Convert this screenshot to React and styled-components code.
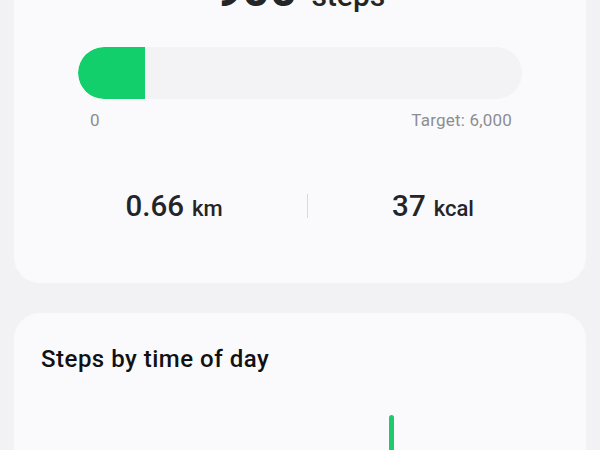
import React from "react";
import styled, { createGlobalStyle } from "styled-components";

const GlobalStyle = createGlobalStyle`
  html, body {
    margin: 0;
    padding: 0;
    background: #f2f2f4;
    font-family: Roboto, "Noto Sans", sans-serif;
    color: #252527;
    overflow: hidden;
  }
`;

const Page = styled.div`
  display: flex;
  flex-direction: column;
  gap: 30px;
  padding: 0 14px;
  margin-top: -62px;
`;

const Card = styled.div`
  background: #fafafc;
  border-radius: 26px;
  padding: ${(p) => p.$pad};
`;

const Headline = styled.div`
  display: flex;
  justify-content: center;
  align-items: baseline;
  line-height: 56px;

  .count {
    font-size: 48px;
    font-weight: 700;
  }
  .unit {
    font-size: 30px;
    font-weight: 500;
    margin-left: 14px;
  }
`;

const Track = styled.div`
  margin: 23px 37px 0;
  height: 52px;
  border-radius: 26px;
  background: #f3f3f5;
  overflow: hidden;
`;

const Fill = styled.div`
  height: 100%;
  background: #12cf6c;
  border-radius: 26px 0 0 26px;
`;

const Scale = styled.div`
  display: flex;
  justify-content: space-between;
  margin: 10px 47px 0 49px;
  line-height: 22px;
  font-size: 17px;
  letter-spacing: 0.2px;
  color: #8d8d92;
`;

const Stats = styled.div`
  display: grid;
  grid-template-columns: 266px 1px 1fr;
  align-items: center;
  margin: 55px 1px 0 0;
  height: 40px;
`;

const Stat = styled.div`
  display: flex;
  justify-content: center;
  align-items: baseline;
  gap: 8px;
  font-weight: 500;

  .value {
    font-size: 29.5px;
  }
  .unit {
    font-size: 22px;
  }
`;

const Divider = styled.div`
  width: 1px;
  height: 24px;
  background: #d9d9dc;
`;

const Title = styled.h2`
  margin: 0;
  font-size: 24px;
  font-weight: 500;
  letter-spacing: 0.5px;
  line-height: 32px;
  color: #111113;
`;

const Chart = styled.div`
  display: grid;
  grid-template-columns: repeat(24, 1fr);
  align-items: end;
  height: 140px;
  margin: 10px 8px 0 0;
`;

const Slot = styled.div`
  display: flex;
  justify-content: center;
`;

const Bar = styled.div`
  width: 5px;
  background: #1ec96f;
  border-radius: 3px 3px 0 0;
`;

const hourly = Array.from({ length: 24 }, (_, h) => (h === 16 ? 110 : 0));

export default function App() {
  const steps = 900;
  const target = 6000;
  return (
    <>
      <GlobalStyle />
      <Page>
        <Card $pad="24px 27px 57px">
          <Headline>
            <span className="count">{steps}</span>
            <span className="unit">steps</span>
          </Headline>
          <Track>
            <Fill style={{ width: `${(steps / target) * 100}%` }} />
          </Track>
          <Scale>
            <span>0</span>
            <span>Target: 6,000</span>
          </Scale>
          <Stats>
            <Stat>
              <span className="value">0.66</span>
              <span className="unit">km</span>
            </Stat>
            <Divider />
            <Stat>
              <span className="value">37</span>
              <span className="unit">kcal</span>
            </Stat>
          </Stats>
        </Card>
        <Card $pad="30px 27px 40px">
          <Title>Steps by time of day</Title>
          <Chart>
            {hourly.map((v, i) => (
              <Slot key={i}>{v > 0 && <Bar style={{ height: v }} />}</Slot>
            ))}
          </Chart>
        </Card>
      </Page>
    </>
  );
}
